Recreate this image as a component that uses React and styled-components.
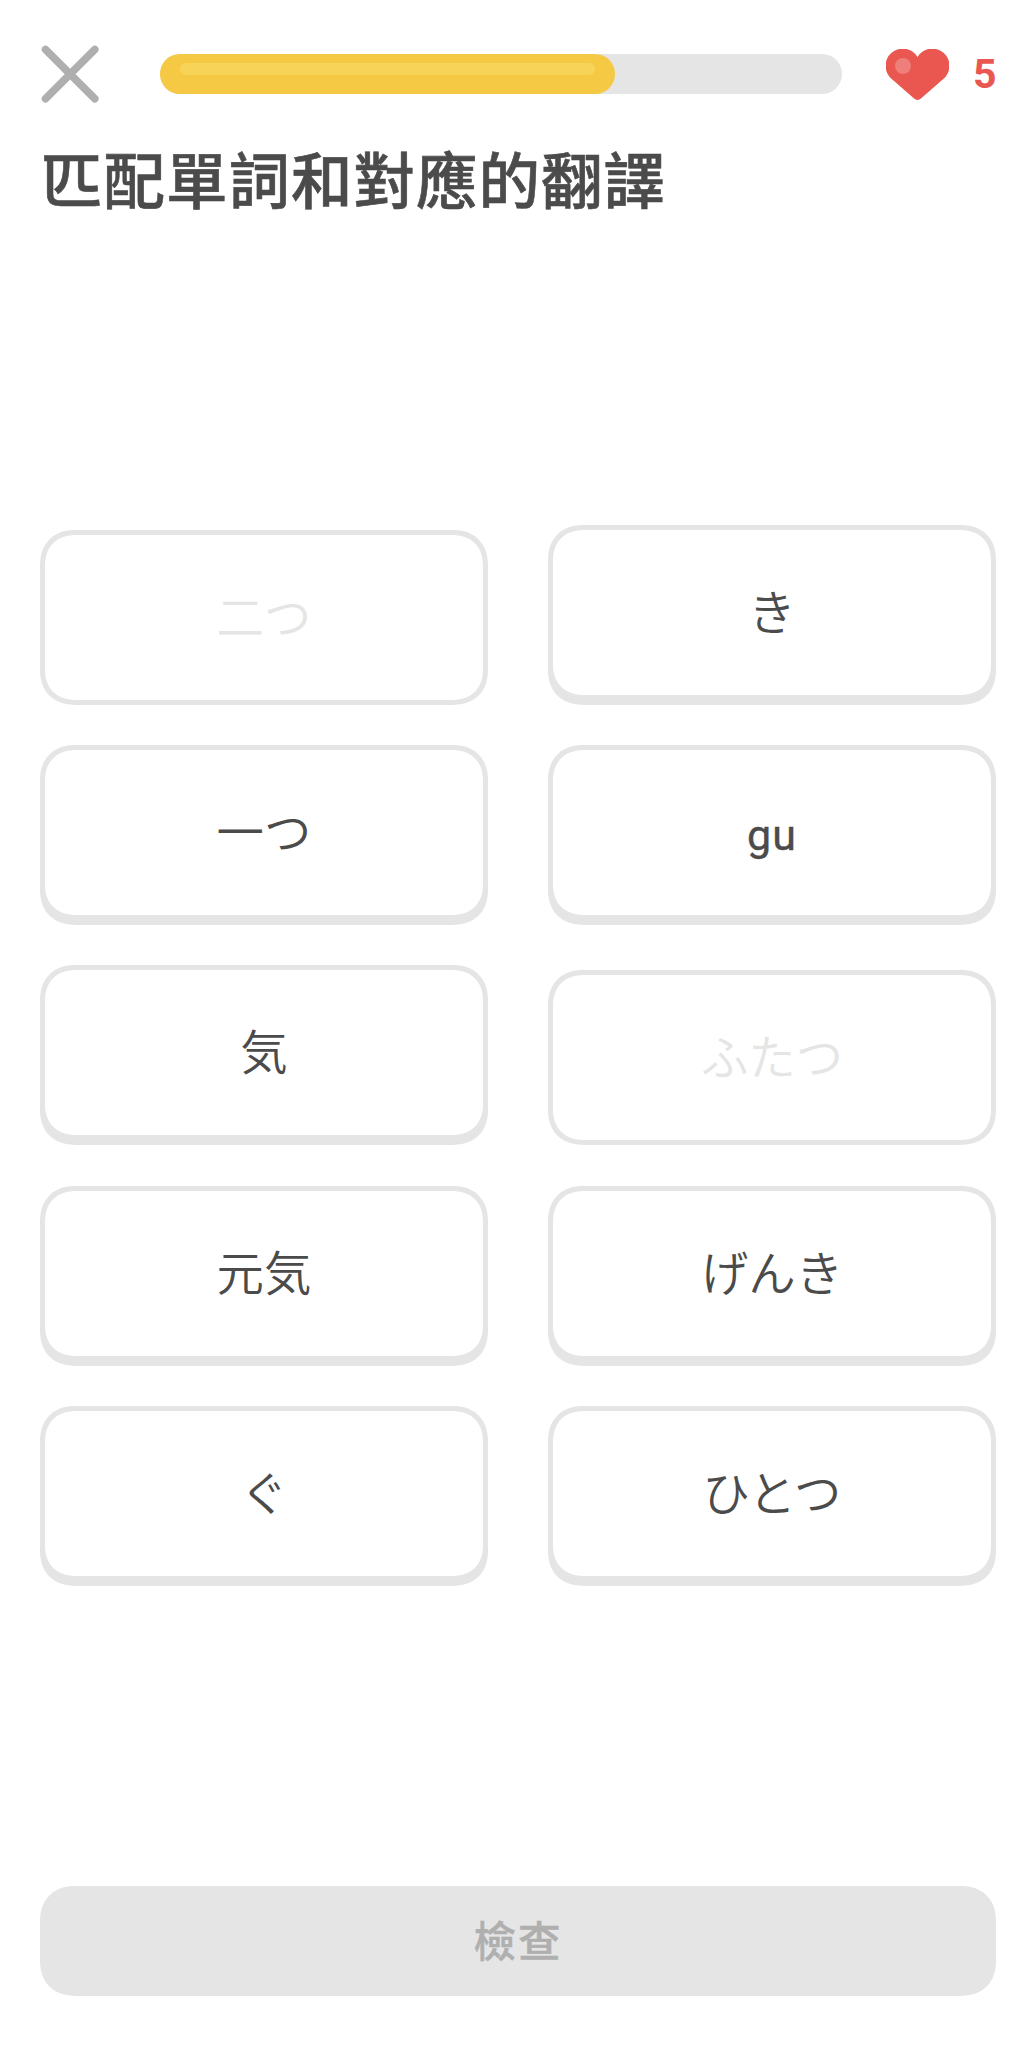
import React from "react";
import styled, { createGlobalStyle } from "styled-components";

/* ---------- Data ---------- */

const CARDS = [
  { text: "二つ", matched: true },
  { text: "き" },
  { text: "一つ" },
  { text: "gu", latin: true },
  { text: "気" },
  { text: "ふたつ", matched: true },
  { text: "元気" },
  { text: "げんき" },
  { text: "ぐ" },
  { text: "ひとつ" },
];

/* ---------- Styles ---------- */

const GlobalStyle = createGlobalStyle`
  *, *::before, *::after {
    box-sizing: border-box;
  }

  body {
    margin: 0;
    background: #fff;
  }

  button {
    margin: 0;
    padding: 0;
    border: none;
    background: none;
    font: inherit;
  }
`;

const Screen = styled.div`
  display: flex;
  flex-direction: column;
  width: 1036px;
  height: 2048px;
  padding: 44px 40px 52px;
  background: #fff;
  color: #4b4b4b;
  font-family: "Noto Sans CJK JP", sans-serif;
`;

const Header = styled.header`
  display: flex;
  align-items: center;
  height: 60px;
`;

const CloseButton = styled.button`
  flex: none;
  width: 60px;
  height: 60px;
  margin-right: 60px;

  svg {
    display: block;
  }
`;

const Track = styled.div`
  flex: none;
  width: 682px;
  height: 40px;
  border-radius: 20px;
  background: #e5e5e5;
`;

const Fill = styled.div`
  height: 100%;
  padding: 9px 20px 0;
  border-radius: 20px;
  background: #f6c944;
`;

const Shine = styled.div`
  height: 12px;
  border-radius: 6px;
  background: #f7d457;
`;

const Hearts = styled.div`
  display: flex;
  flex: none;
  align-items: center;
  gap: 24px;
  margin-left: 44px;
`;

const HeartCount = styled.span`
  font-family: Roboto, sans-serif;
  font-size: 41px;
  font-weight: 700;
  line-height: 60px;
  color: #ea5750;
`;

const Title = styled.h1`
  margin: 28px 0 0;
  padding-left: 1px;
  height: 92px;
  font-family: "Noto Sans CJK TC", sans-serif;
  font-size: 61.5px;
  font-weight: 500;
  letter-spacing: 1px;
  line-height: 92px;
  white-space: nowrap;
  -webkit-text-stroke: 0.6px currentColor;
`;

const Grid = styled.div`
  display: grid;
  grid-template-columns: 448px 448px;
  column-gap: 60px;
  row-gap: 40.2px;
  margin-top: 301px;
`;

const Card = styled.button`
  display: flex;
  align-items: center;
  justify-content: center;
  height: 175px;
  margin: ${({ $matched }) => ($matched ? "5px 0 0" : "0 0 5px")};
  padding: ${({ $latin }) => ($latin ? "4px 0 0" : "0 0 5px")};
  border: 5px solid #e5e5e5;
  border-radius: 36px;
  corner-shape: superellipse(1.2);
  background: #fff;
  box-shadow: ${({ $matched }) => ($matched ? "none" : "0 5px 0 #e5e5e5")};
  color: ${({ $matched }) => ($matched ? "#e5e5e5" : "#4b4b4b")};
  font-family: ${({ $latin }) =>
    $latin ? "Roboto, sans-serif" : '"Noto Sans CJK JP", sans-serif'};
  font-size: ${({ $latin }) => ($latin ? "43px" : "47.4px")};
  font-weight: ${({ $latin }) => ($latin ? 400 : 350)};
  letter-spacing: ${({ $latin }) => ($latin ? "1px" : "0")};
  line-height: 70px;
  -webkit-text-stroke: ${({ $latin }) => ($latin ? "0.4px" : "0")} currentColor;
`;

const CheckButton = styled.button`
  height: 110px;
  margin-top: auto;
  padding-bottom: 5px;
  border-radius: 36px;
  corner-shape: superellipse(1.2);
  background: #e5e5e5;
  color: #afafaf;
  font-family: "Noto Sans CJK TC", sans-serif;
  font-size: 42.5px;
  font-weight: 500;
  letter-spacing: 2px;
  line-height: 105px;
  -webkit-text-stroke: 0.5px currentColor;
`;

/* ---------- Icons ---------- */

const CloseIcon = () => (
  <svg width="60" height="60" viewBox="0 0 60 60" fill="none">
    <path
      d="M5.5 5.5 54.8 54.8M54.8 5.5 5.5 54.8"
      stroke="#afafaf"
      strokeWidth="7.6"
      strokeLinecap="round"
    />
  </svg>
);

const HeartIcon = () => (
  <svg width="63" height="51" viewBox="0 0 63 51">
    <path
      d="M31.5 7.9A17.2 17.2 0 1 0 6 30.2L27.5 49Q31.5 52.8 35.5 49L57 30.2A17.2 17.2 0 1 0 31.5 7.9Z"
      fill="#ea5750"
    />
    <circle cx="17" cy="17" r="8" fill="#ef7f7b" />
  </svg>
);

/* ---------- Component ---------- */

const App = () => {
  const progress = 66.7;

  return (
    <>
      <GlobalStyle />
      <Screen>
        <Header>
          <CloseButton>
            <CloseIcon />
          </CloseButton>
          <Track>
            <Fill style={{ width: `${progress}%` }}>
              <Shine />
            </Fill>
          </Track>
          <Hearts>
            <HeartIcon />
            <HeartCount>5</HeartCount>
          </Hearts>
        </Header>

        <Title>匹配單詞和對應的翻譯</Title>

        <Grid>
          {CARDS.map(({ text, matched, latin }) => (
            <Card key={text} $matched={matched} $latin={latin}>
              {text}
            </Card>
          ))}
        </Grid>

        <CheckButton>檢查</CheckButton>
      </Screen>
    </>
  );
};

export default App;
